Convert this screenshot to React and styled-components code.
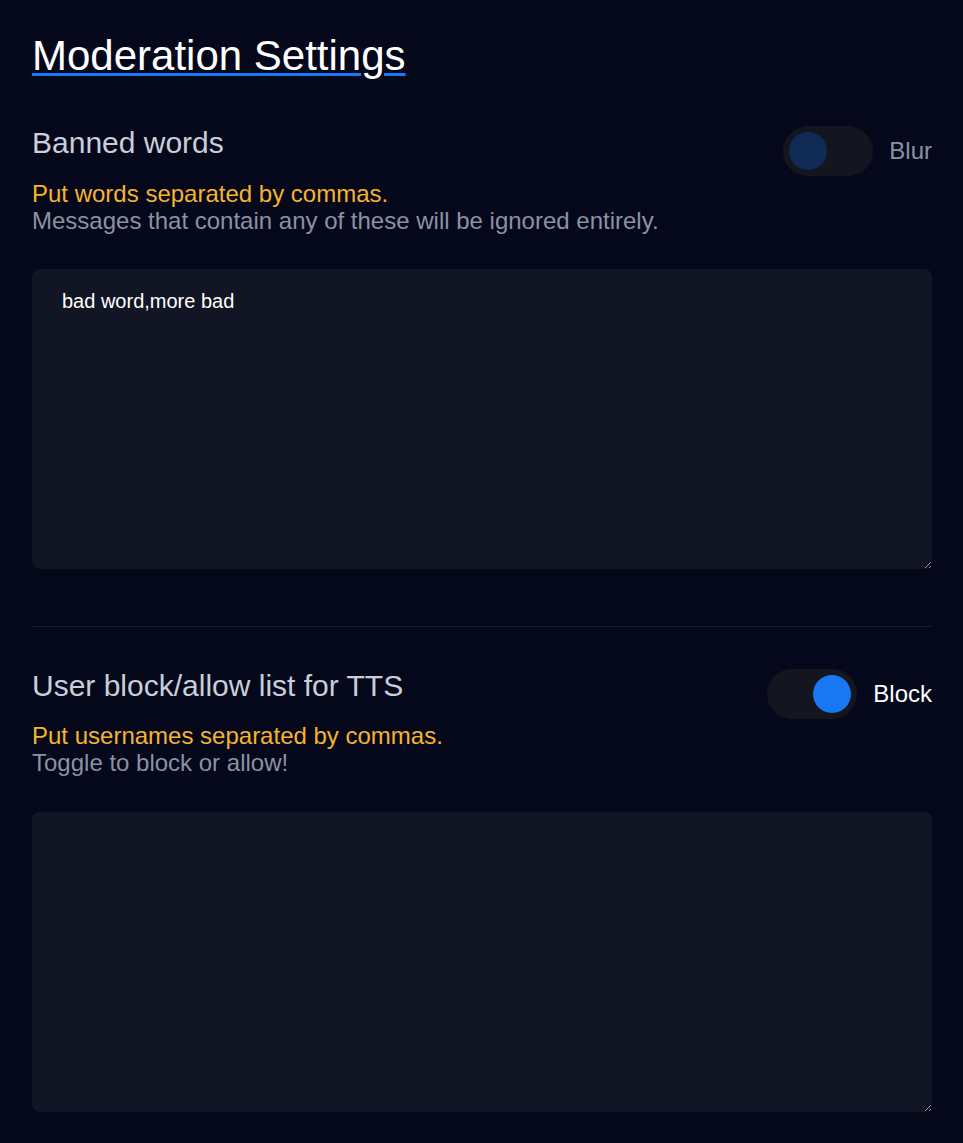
import React, { useState } from 'react';
import styled, { createGlobalStyle } from 'styled-components';

const colors = {
  bg: '#05081a',
  field: '#121523',
  track: '#14161f',
  knobOff: '#0f2a55',
  blue: '#1877f2',
  title: '#c9ced8',
  muted: '#8b92a2',
  yellow: '#f6b330',
  line: '#1a1e2b',
  white: '#ffffff',
};

const GlobalStyle = createGlobalStyle`
  html, body {
    margin: 0;
    padding: 0;
    background: ${colors.bg};
  }
  body {
    font-family: "Liberation Sans", Arial, sans-serif;
  }
`;

const Page = styled.main`
  padding: 32px 31px 32px 32px;
  background: ${colors.bg};
  min-height: 100vh;
  box-sizing: border-box;
`;

const Heading = styled.h1`
  margin: 0 0 46px;
  font-size: 42px;
  font-weight: 400;
  line-height: 1.15;
  color: ${colors.white};
  text-decoration: underline;
  text-decoration-color: ${colors.blue};
  text-decoration-thickness: 3px;
  text-underline-offset: 3px;
`;

const Section = styled.section`
  display: flex;
  flex-direction: column;
  padding: ${p => (p.$first ? '0' : '42px')} 0 0;
`;

const Header = styled.div`
  display: flex;
  justify-content: space-between;
  align-items: flex-start;
`;

const Title = styled.h2`
  margin: 0 0 19px;
  font-size: 30px;
  font-weight: 400;
  line-height: 1.15;
  color: ${colors.title};
`;

const Description = styled.p`
  margin: 0;
  font-size: 24px;
  line-height: 27px;
  color: ${colors.muted};
`;

const Hint = styled.span`
  display: block;
  color: ${colors.yellow};
`;

const ToggleWrap = styled.label`
  display: flex;
  align-items: center;
  gap: 16px;
  cursor: pointer;
`;

const Track = styled.span`
  position: relative;
  display: block;
  width: 90px;
  height: 50px;
  border-radius: 25px;
  background: ${colors.track};
`;

const Knob = styled.span`
  position: absolute;
  top: 6px;
  left: ${p => (p.$on ? '46px' : '6px')};
  width: 38px;
  height: 38px;
  border-radius: 50%;
  background: ${p => (p.$on ? colors.blue : colors.knobOff)};
  transition: left 0.2s;
`;

const ToggleLabel = styled.span`
  font-size: 24px;
  color: ${p => (p.$on ? colors.white : colors.muted)};
`;

const Field = styled.textarea`
  display: block;
  box-sizing: border-box;
  width: 100%;
  height: 300px;
  margin-top: ${p => (p.$gap ? p.$gap : '35px')};
  padding: 21px 30px;
  border: none;
  border-radius: 8px;
  outline: none;
  background: ${colors.field};
  color: ${colors.white};
  font-family: "Liberation Sans", Arial, sans-serif;
  font-size: 20px;
  line-height: 1.15;
`;

const Divider = styled.hr`
  margin: 57px 0 0;
  border: none;
  height: 1px;
  background: ${colors.line};
`;

const Toggle = ({ on, label, onChange }) => (
  <ToggleWrap onClick={onChange}>
    <Track>
      <Knob $on={on} />
    </Track>
    <ToggleLabel $on={on}>{label}</ToggleLabel>
  </ToggleWrap>
);

const App = () => {
  const [blur, setBlur] = useState(false);
  const [block, setBlock] = useState(true);
  const [words, setWords] = useState('bad word,more bad');
  const [users, setUsers] = useState('');

  return (
    <Page>
      <GlobalStyle />
      <Heading>Moderation Settings</Heading>

      <Section $first>
        <Header>
          <div>
            <Title>Banned words</Title>
            <Description>
              <Hint>Put words separated by commas.</Hint>
              Messages that contain any of these will be ignored entirely.
            </Description>
          </div>
          <Toggle on={blur} label="Blur" onChange={() => setBlur(!blur)} />
        </Header>
        <Field value={words} onChange={e => setWords(e.target.value)} />
      </Section>

      <Divider />

      <Section>
        <Header>
          <div>
            <Title>User block/allow list for TTS</Title>
            <Description>
              <Hint>Put usernames separated by commas.</Hint>
              Toggle to block or allow!
            </Description>
          </div>
          <Toggle
            on={block}
            label={block ? 'Block' : 'Allow'}
            onChange={() => setBlock(!block)}
          />
        </Header>
        <Field $gap="36px" value={users} onChange={e => setUsers(e.target.value)} />
      </Section>
    </Page>
  );
};

export default App;
